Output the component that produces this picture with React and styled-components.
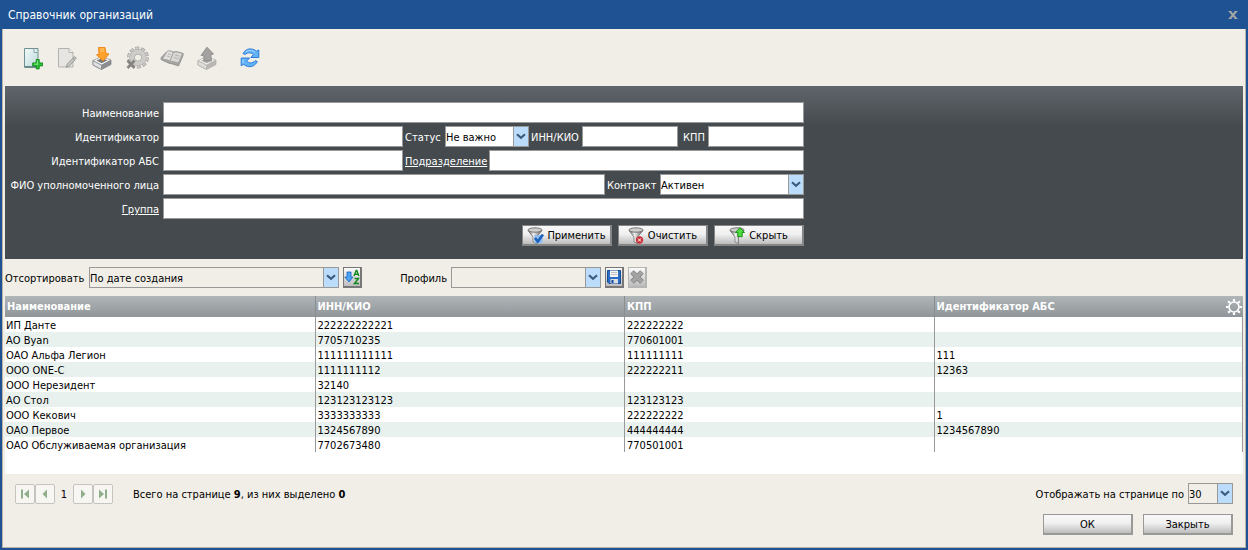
import React from "react";
import styled, { createGlobalStyle, css } from "styled-components";

const GlobalStyle = createGlobalStyle`
  *, *::before, *::after { box-sizing: border-box; }
  body {
    margin: 0;
    background: #1e5292;
    color: #000;
    font: 11px/15px "DejaVu Sans Condensed", "Open Sans", sans-serif;
  }
  button, input, select { font: inherit; color: inherit; margin: 0; border-radius: 0; }
`;

const Window = styled.div`
  display: flex;
  flex-direction: column;
  min-height: 100vh;
  padding: 0 2px 2px;
  background: #1e5292;
`;

const TitleBar = styled.header`
  display: flex;
  align-items: center;
  justify-content: space-between;
  height: 29px;
  padding: 0 8px 0 6px;
`;

const Title = styled.h1`
  margin: 0;
  padding-top: 2px;
  color: #fff;
  font-size: 12px;
  font-weight: 400;
`;

const CloseButton = styled.button`
  display: flex;
  padding: 0;
  border: 0;
  background: none;
`;

const Body = styled.main`
  flex: 1;
  display: flex;
  flex-direction: column;
  padding: 0 2px;
  background: #f1eee7;
  border: solid #b8b4a8;
  border-width: 0 1px 1px;
`;

const Toolbar = styled.div`
  display: flex;
  align-items: center;
  gap: 11px;
  height: 57px;
  padding: 0 15px;
`;

const ToolButton = styled.button`
  display: flex;
  width: 24px;
  height: 24px;
  padding: 0;
  border: 0;
  background: none;
  margin-left: ${(p) => (p.$apart ? "8px" : "0")};
`;

const FilterPanel = styled.form`
  padding: 16px 0 13px;
  color: #fff;
  background: linear-gradient(#5f656a, #444a4e 40px);
`;

const FilterRows = styled.div`
  display: flex;
  flex-direction: column;
  gap: 3px;
  width: 799px;
  max-width: 100%;
`;

const FilterRow = styled.div`
  display: flex;
  align-items: center;
`;

const labelStyle = css`
  flex: none;
  width: ${(p) => (p.$w ? `${p.$w}px` : "auto")};
  padding: 2px 4px 0 0;
  text-align: ${(p) => p.$align || "left"};
  white-space: nowrap;
`;

const Label = styled.label`
  ${labelStyle}
`;

const LabelLink = styled.div`
  ${labelStyle}
  a { color: inherit; }
`;

const TextInput = styled.input`
  flex: ${(p) => (p.$w ? "none" : "1")};
  width: ${(p) => (p.$w ? `${p.$w}px` : "auto")};
  min-width: 0;
  height: 21px;
  padding: 0 1px;
  color: #000;
  background: #fff;
  border: 1px solid #999;
  margin-right: ${(p) => p.$gap || 0}px;
`;

const SelectBox = styled.span`
  position: relative;
  display: block;
  flex: none;
  width: ${(p) => p.$w}px;
  height: 21px;
  margin-right: ${(p) => p.$gap || 0}px;
  background: ${(p) => (p.$plain ? "transparent" : "#fff")};
  border: 1px solid #999;

  select {
    display: block;
    width: 100%;
    height: 100%;
    padding: 2px 16px 0 0;
    color: #000;
    background: none;
    border: 0;
    appearance: none;
  }
`;

const Arrow = styled.span`
  position: absolute;
  top: 0;
  right: 0;
  display: flex;
  align-items: center;
  justify-content: center;
  width: 15px;
  height: 100%;
  background: #bbdcfb;
  border-left: 1px solid #999;
  pointer-events: none;
`;

const ButtonRow = styled.div`
  display: flex;
  justify-content: flex-end;
  gap: ${(p) => p.$gap}px;
  padding-top: ${(p) => p.$top}px;
`;

const PushButton = styled.button`
  display: flex;
  align-items: center;
  justify-content: center;
  gap: 3px;
  width: 90px;
  height: 21px;
  padding: 0;
  color: #000;
  background: linear-gradient(#f8f8f8, #f0f0f0 45%, #bdbdbd);
  border: solid #999;
  border-width: 1px 2px 2px 1px;
`;

const FilterButton = styled(PushButton)`
  border-color: #858585;
`;

const SortBar = styled.div`
  display: flex;
  align-items: center;
  height: 37px;
`;

const IconButton = styled.button`
  display: flex;
  flex: none;
  width: 19px;
  height: 21px;
  margin-left: 4px;
  padding: 1px 0 0;
  background: linear-gradient(#fafafa, #bdbdbd);
  border: solid ${(p) => (p.disabled ? "#b5b5b5" : "#777")};
  border-width: 1px 2px 2px 1px;
`;

const GridArea = styled.div`
  flex: 1;
  background: #fff;
  margin-bottom: 9px;
`;

const Grid = styled.table`
  width: 100%;
  table-layout: fixed;
  border-collapse: separate;
  border-spacing: 0;
`;

const HeadCell = styled.th`
  height: 21px;
  padding: 0 2px;
  color: #fff;
  font-weight: 700;
  text-align: left;
  background: linear-gradient(#b0b5b8, #8f9598);
  & + & { border-left: 1px solid #8a8e91; }
  &:last-child { padding-right: 1px; }
`;

const HeadContent = styled.div`
  display: flex;
  align-items: center;
  justify-content: space-between;
  svg { display: block; }
`;

const GearButton = styled.button`
  padding: 0;
  border: 0;
  background: none;
`;

const Row = styled.tr`
  background: ${(p) => (p.$odd ? "#e9f1ee" : "#fff")};
`;

const Cell = styled.td`
  height: 15px;
  padding: 2px 1px 0;
  line-height: 13px;
  & + & { padding: 2px 2px 0; border-left: 1px solid #999; }
  &:last-child { border-right: 1px solid #999; }
`;

const Footer = styled.footer`
  display: flex;
  align-items: center;
  justify-content: space-between;
  padding: 0 10px;
`;

const Pager = styled.nav`
  display: flex;
  align-items: center;
`;

const PageButton = styled.button`
  display: flex;
  align-items: center;
  justify-content: center;
  width: 20px;
  height: 20px;
  padding: 0;
  background: #f7f6f2;
  border: 1px solid #c6c4bf;
  border-radius: 2px;
`;

const PageNumber = styled.span`
  width: 18px;
  padding-top: 2px;
  text-align: center;
`;

const Summary = styled.span`
  margin-left: 20px;
  padding-top: 2px;
`;

const PageSize = styled.div`
  display: flex;
  align-items: center;
`;

const Actions = styled(ButtonRow)`
  padding: 10px 10px 12px;
`;

/* ---------- icons ---------- */

const Chevron = () => (
  <svg width="10" height="7" viewBox="0 0 10 7">
    <path d="M1 1.200 5 4.800 9 1.200" fill="none" stroke="#3d5b80" strokeWidth="2.200" />
  </svg>
);

const CloseIcon = () => (
  <svg width="10" height="10" viewBox="0 0 10 10">
    <path d="M2 1.500 8 8.500M8 1.500 2 8.500" stroke="#a3a5a4" strokeWidth="2" />
    <path d="M.5 1.500h3M6.500 1.500h3M.5 8.500h3M6.500 8.500h3" stroke="#a3a5a4" />
  </svg>
);

const NewDocIcon = () => (
  <svg width="24" height="24" viewBox="0 0 24 24">
    <defs>
      <linearGradient id="newDoc" x1="0" y1="0" x2="1" y2="1">
        <stop offset="0" stopColor="#f4fafa" />
        <stop offset="1" stopColor="#bcd9da" />
      </linearGradient>
    </defs>
    <path d="M4.500 2.500h13.500v18.500h-13.500z" fill="url(#newDoc)" stroke="#6f9092" />
    <path d="M4.500 21h13.500" stroke="#43686a" strokeWidth="1.200" />
    <path d="M14 2.500v4h4" fill="#e6f0f2" stroke="#8aa5a8" />
    <path d="M16.200 13.500h3v3.400h3.300v3h-3.300v3h-3v-3h-3.500v-3h3.500z" fill="#2fbf38" stroke="#0b8a1a" strokeWidth=".9" />
    <path d="M17.500 14.500v4M14 18.200h4" stroke="#8bec86" strokeWidth=".9" />
  </svg>
);

const EditDocIcon = () => (
  <svg width="24" height="24" viewBox="0 0 24 24">
    <path d="M3.500 2.500h10.500l4 4v14.500h-14.500z" fill="#e6e5e2" stroke="#b3b2b0" />
    <path d="M14 2.500v4h4" fill="#f3f2ef" stroke="#b3b2b0" />
    <path d="m19.500 10.500 1.800 1.600-7 8-3 1.200.8-3z" fill="#c9c8c5" stroke="#929291" strokeWidth=".9" />
    <path d="m18 12.500 1.800 1.600" stroke="#929291" />
  </svg>
);

const Tray = ({ dark, side, light, top }) => (
  <>
    <path d="M3 14.500v4.500l8.500 4.500 9.500-5v-4.500l-9.500 5z" fill={side} stroke={dark} strokeWidth=".7" />
    <path d="M3 14.500v4.500l8.500 4.500V19z" fill={light} stroke={dark} strokeWidth=".6" />
    <path d="m3 14.500 8.500-4 9.500 3.500-9.500 5z" fill={top} stroke={dark} strokeWidth=".6" />
    <path d="m6.500 14.500 5.200-2.300 5.800 2-5.800 3z" fill={dark} />
  </>
);

const ImportIcon = () => (
  <svg width="24" height="24" viewBox="0 0 24 24">
    <Tray dark="#77797b" side="#8b8d8f" light="#dfe0e1" top="#f6f6f6" />
    <path d="M8.500 1.500h6.500l1 6 3 .5-6 7L6.500 8.800l2.500-.5z" fill="#ffa22c" stroke="#ee8212" strokeWidth=".9" />
    <path d="M10 3h4M10.200 5h4.200" stroke="#ffc878" />
  </svg>
);

const ExportIcon = () => (
  <svg width="24" height="24" viewBox="0 0 24 24">
    <Tray dark="#aaa9a7" side="#b9b8b6" light="#dddcd9" top="#efeeeb" />
    <path d="M12 1.200 18.500 8 15.800 8.800l.6 6H9L8.800 9.300 6 9.500z" fill="#a3a2a0" stroke="#8b8a89" strokeWidth=".9" />
  </svg>
);

const GearCrossIcon = () => (
  <svg width="24" height="24" viewBox="0 0 24 24">
    <circle cx="13" cy="11.500" r="9" fill="none" stroke="#a3a2a0" strokeWidth="3.800" strokeDasharray="3.800 1.855" />
    <circle cx="13" cy="11.500" r="9" fill="none" stroke="#cecdca" strokeWidth="2.400" strokeDasharray="2.600 3.055" strokeDashoffset="-.6" />
    <circle cx="13" cy="11.500" r="5.800" fill="none" stroke="#a3a2a0" strokeWidth="5.400" />
    <circle cx="13" cy="11.500" r="5.900" fill="none" stroke="#cecdca" strokeWidth="4.400" />
    <path d="m2.500 14.500 7 7.500m0-7.500-7 7.500" stroke="#858483" strokeWidth="2.600" />
  </svg>
);

const BookIcon = () => (
  <svg width="24" height="24" viewBox="0 0 24 24">
    <path d="M7 5.500c2-1 4-.8 6 .5 3-.6 6-.2 10.200 1.500l-.2 2-4.500 10.500-7.500-2.500-1 .2-9-4.200.2-2z" fill="#a5a4a2" stroke="#8b8a89" strokeWidth=".8" />
    <path d="M7.500 5.500c2-.6 3.800-.2 5.300 1L9.500 14.500c-2-1.200-4-1.600-6.500-1.500z" fill="#e0dfdc" />
    <path d="M13.800 6.800c2.600-.6 5-.3 8.200 1L18 16.500c-2.700-1.200-5.200-1.700-7.500-1.500z" fill="#d9d8d5" />
    <path d="m8 7.800 3 .7M7 10l3 .7M15 9l4.500 1.200M14 11.500l4.500 1.200" stroke="#b0afad" strokeWidth=".9" />
  </svg>
);

const RefreshIcon = () => (
  <svg width="24" height="24" viewBox="0 0 24 24">
    <g fill="#62b2f6" stroke="#2a7bdc" strokeWidth="1" strokeLinejoin="round">
      <path d="M5 7.500C7 4 10 2.600 13.200 3c2.200.2 3.800 1 5 2.200L20.800 4v7.500h-8l2.600-2.800C13.500 6.600 9.500 6 7.200 8.500z" />
      <path d="M19.300 15.500c-2 3.900-5 5.500-8.500 5.100-2.200-.2-3.800-1-5-2.300L3.200 19.800V12h8.300l-2.800 3c2 2.300 6 2.800 8.300-.3z" />
    </g>
    <path d="M8 6c2.500-2.200 6.500-2.200 9 .3M5 13.500v4" fill="none" stroke="#b5dcfb" strokeWidth=".9" />
  </svg>
);

const Funnel = ({ id, children }) => (
  <svg width="17" height="17" viewBox="0 0 17 17">
    <defs>
      <linearGradient id={id}>
        <stop offset="0" stopColor="#5c5c5c" />
        <stop offset=".4" stopColor="#f0f0f0" />
        <stop offset="1" stopColor="#555" />
      </linearGradient>
    </defs>
    <path d="M1 3.500 6 10v5l3.500 1.500V10L15 3.500z" fill={`url(#${id})`} stroke="#666" strokeWidth=".7" />
    <ellipse cx="8" cy="3" rx="7" ry="2.200" fill="#cfcfcf" stroke="#6c6c6c" strokeWidth=".9" />
    {children}
  </svg>
);

const ApplyIcon = () => (
  <Funnel id="funnelApply">
    <path d="M7.500 8h8v8h-8z" fill="#8fbdf0" />
    <path d="m8 11 2.800 3.500L16 7.500" fill="none" stroke="#1b62bf" strokeWidth="2.600" />
  </Funnel>
);

const ClearIcon = () => (
  <Funnel id="funnelClear">
    <circle cx="11.500" cy="13" r="3.700" fill="#c9343b" />
    <path d="m10 11.500 3 3m0-3-3 3" stroke="#fff" />
  </Funnel>
);

const HideIcon = () => (
  <Funnel id="funnelHide">
    <path d="M11 .6 15.500 5.500h-2.300v4.200h-4.400V5.500H6.500z" fill="#4fdc3c" stroke="#138a14" strokeWidth=".9" />
  </Funnel>
);

const SortIcon = () => (
  <svg width="16" height="16" viewBox="0 0 16 16">
    <path d="M3 3h4v5h2l-4 5-4.200-5H3z" fill="#49a3f2" stroke="#1b62bf" strokeWidth=".8" />
    <path d="m10 7 2.200-5.500h.6l2 5.500M11 5.200h3.500" fill="none" stroke="#14891f" strokeWidth="1.400" />
    <path d="M10.500 9.500h4l-4 5h4.500" fill="none" stroke="#14891f" strokeWidth="1.500" />
  </svg>
);

const SaveIcon = () => (
  <svg width="16" height="16" viewBox="0 0 16 16">
    <path d="M1.500 1.500h13v13H3l-1.500-1.500z" fill="#2b6cc4" stroke="#174a94" />
    <path d="M4 1.500h8V8H4z" fill="#f5f5f5" />
    <path d="M5 3.500h6M5 5.500h6" stroke="#b5b5b5" strokeWidth=".8" />
    <path d="M4.500 10h7.500v4.500h-7.500z" fill="#d8dde3" />
    <path d="M5.500 11h2v3h-2z" fill="#174a94" />
  </svg>
);

const DeleteIcon = () => (
  <svg width="16" height="16" viewBox="0 0 16 16">
    <path d="m3 3 10 10M13 3 3 13" stroke="#808080" strokeWidth="5" />
    <path d="m3 3 10 10M13 3 3 13" stroke="#a3a3a3" strokeWidth="3.400" />
  </svg>
);

const GearIcon = () => (
  <svg width="16" height="16" viewBox="0 0 16 16" fill="none" stroke="#fff">
    <circle cx="8" cy="8" r="5" strokeWidth="1.600" />
    <path
      d="M8 0v2.500M8 13.500V16M0 8h2.500M13.500 8H16M2.200 2.200l1.800 1.800M12 12l1.800 1.800M13.800 2.200 12 4M4 12l-1.800 1.800"
      strokeWidth="2.200"
    />
  </svg>
);

const PageIcon = ({ bar, next }) => (
  <svg width="10" height="10" viewBox="0 0 10 10" fill="#8fae8c">
    <g transform={next ? "rotate(180 5 5)" : undefined}>
      <path d={bar ? "M9 .5v9L4 5z" : "M7 .5v9L2.500 5z"} />
      {bar && <path d="M1 .5h2v9H1z" />}
    </g>
  </svg>
);

/* ---------- parts ---------- */

const Select = ({ id, width, gap, plain, options }) => (
  <SelectBox $w={width} $gap={gap} $plain={plain}>
    <select id={id}>
      {options.map((o) => (
        <option key={o}>{o}</option>
      ))}
    </select>
    <Arrow>
      <Chevron />
    </Arrow>
  </SelectBox>
);

const tools = [
  { name: "Создать", Icon: NewDocIcon },
  { name: "Изменить", Icon: EditDocIcon },
  { name: "Импорт", Icon: ImportIcon },
  { name: "Отключить", Icon: GearCrossIcon },
  { name: "Журнал", Icon: BookIcon },
  { name: "Экспорт", Icon: ExportIcon },
  { name: "Обновить", Icon: RefreshIcon, apart: true },
];

const columns = ["Наименование", "ИНН/КИО", "КПП", "Идентификатор АБС"];

const rows = [
  ["ИП Данте", "222222222221", "222222222", ""],
  ["АО Byan", "7705710235", "770601001", ""],
  ["ОАО Альфа Легион", "111111111111", "111111111", "111"],
  ["ООО ONE-C", "1111111112", "222222211", "12363"],
  ["ООО Нерезидент", "32140", "", ""],
  ["АО Стол", "123123123123", "123123123", ""],
  ["ООО Кекович", "3333333333", "222222222", "1"],
  ["ОАО Первое", "1324567890", "444444444", "1234567890"],
  ["ОАО Обслуживаемая организация", "7702673480", "770501001", ""],
];

export default function App() {
  return (
    <Window>
      <GlobalStyle />
      <TitleBar>
        <Title>Справочник организаций</Title>
        <CloseButton type="button" aria-label="Закрыть окно">
          <CloseIcon />
        </CloseButton>
      </TitleBar>
      <Body>
        <Toolbar>
          {tools.map(({ name, Icon, apart }) => (
            <ToolButton key={name} type="button" aria-label={name} $apart={apart}>
              <Icon />
            </ToolButton>
          ))}
        </Toolbar>

        <FilterPanel onSubmit={(e) => e.preventDefault()}>
          <FilterRows>
            <FilterRow>
              <Label htmlFor="name" $w={158} $align="right">Наименование</Label>
              <TextInput id="name" />
            </FilterRow>
            <FilterRow>
              <Label htmlFor="ident" $w={158} $align="right">Идентификатор</Label>
              <TextInput id="ident" $w={240} $gap={2} />
              <Label htmlFor="status" $w={40}>Статус</Label>
              <Select id="status" width={84} gap={2} options={["Не важно"]} />
              <Label htmlFor="inn" $w={51}>ИНН/КИО</Label>
              <TextInput id="inn" $w={96} $gap={5} />
              <Label htmlFor="kpp" $w={25}>КПП</Label>
              <TextInput id="kpp" />
            </FilterRow>
            <FilterRow>
              <Label htmlFor="abs" $w={158} $align="right">Идентификатор АБС</Label>
              <TextInput id="abs" $w={240} $gap={2} />
              <LabelLink $w={84}><a href="#unit">Подразделение</a></LabelLink>
              <TextInput aria-label="Подразделение" />
            </FilterRow>
            <FilterRow>
              <Label htmlFor="person" $w={158} $align="right">ФИО уполномоченного лица</Label>
              <TextInput id="person" $gap={2} />
              <Label htmlFor="contract" $w={53}>Контракт</Label>
              <Select id="contract" width={144} options={["Активен"]} />
            </FilterRow>
            <FilterRow>
              <LabelLink $w={158} $align="right"><a href="#group">Группа</a></LabelLink>
              <TextInput aria-label="Группа" />
            </FilterRow>
            <ButtonRow $gap={6} $top={3}>
              <FilterButton type="submit"><ApplyIcon />Применить</FilterButton>
              <FilterButton type="button"><ClearIcon />Очистить</FilterButton>
              <FilterButton type="button"><HideIcon />Скрыть</FilterButton>
            </ButtonRow>
          </FilterRows>
        </FilterPanel>

        <SortBar>
          <Label htmlFor="sort" $w={84}>Отсортировать</Label>
          <Select id="sort" width={250} plain options={["По дате создания"]} />
          <IconButton type="button" aria-label="Направление сортировки"><SortIcon /></IconButton>
          <Label htmlFor="profile" $w={89} $align="right">Профиль</Label>
          <Select id="profile" width={150} plain options={[""]} />
          <IconButton type="button" aria-label="Сохранить профиль"><SaveIcon /></IconButton>
          <IconButton type="button" aria-label="Удалить профиль" disabled><DeleteIcon /></IconButton>
        </SortBar>

        <GridArea>
          <Grid>
            <thead>
              <tr>
                {columns.map((c, i) => (
                  <HeadCell key={c}>
                    <HeadContent>
                      {c}
                      {i === columns.length - 1 && (
                        <GearButton type="button" aria-label="Настройка столбцов"><GearIcon /></GearButton>
                      )}
                    </HeadContent>
                  </HeadCell>
                ))}
              </tr>
            </thead>
            <tbody>
              {rows.map((r, i) => (
                <Row key={r[0]} $odd={i % 2 === 1}>
                  {r.map((v, j) => (
                    <Cell key={j}>{v}</Cell>
                  ))}
                </Row>
              ))}
            </tbody>
          </Grid>
        </GridArea>

        <Footer>
          <Pager>
            <PageButton type="button" aria-label="Первая"><PageIcon bar /></PageButton>
            <PageButton type="button" aria-label="Предыдущая"><PageIcon /></PageButton>
            <PageNumber>1</PageNumber>
            <PageButton type="button" aria-label="Следующая"><PageIcon next /></PageButton>
            <PageButton type="button" aria-label="Последняя"><PageIcon bar next /></PageButton>
            <Summary>
              Всего на странице <b>9</b>, из них выделено <b>0</b>
            </Summary>
          </Pager>
          <PageSize>
            <Label htmlFor="size">Отображать на странице по</Label>
            <Select id="size" width={45} plain options={["30"]} />
          </PageSize>
        </Footer>
        <Actions $gap={10}>
          <PushButton type="button">ОК</PushButton>
          <PushButton type="button">Закрыть</PushButton>
        </Actions>
      </Body>
    </Window>
  );
}
